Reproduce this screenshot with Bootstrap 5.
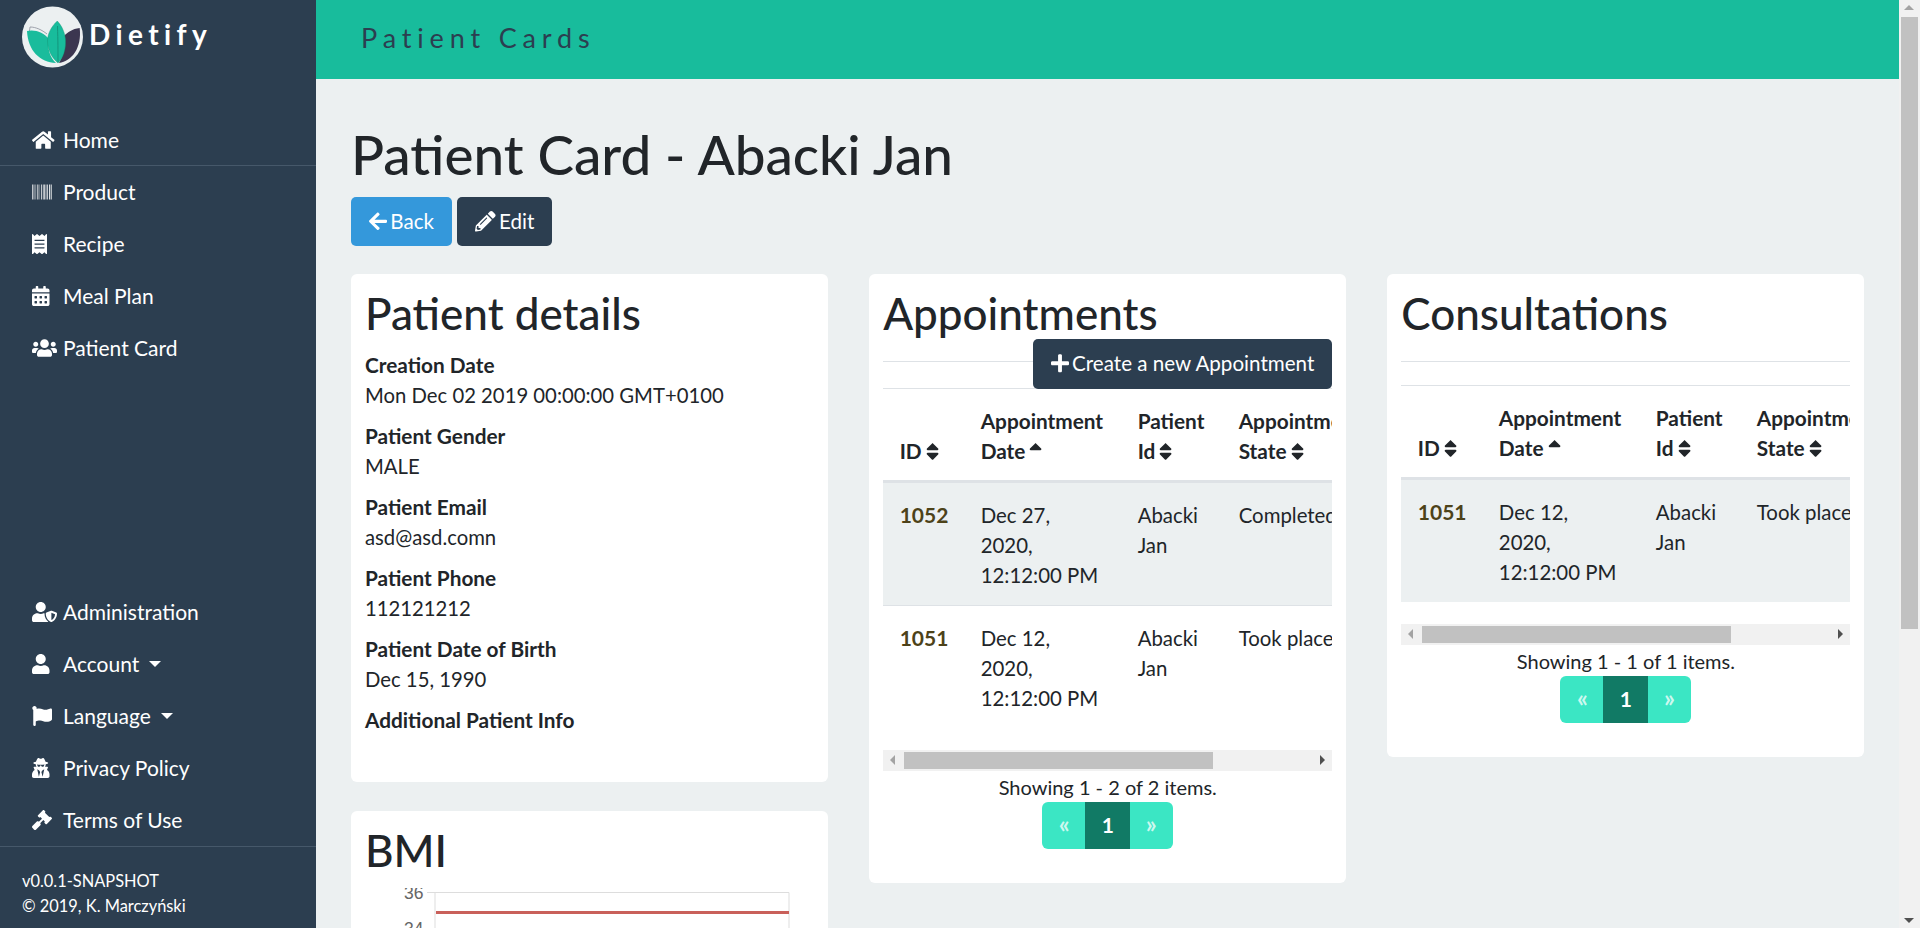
<!DOCTYPE html>
<html lang="en">
<head>
    <meta charset="UTF-8">
    <meta name="viewport" content="width=device-width, initial-scale=1.0">
    <title>Patient Card - Dietify</title>
    <link href="https://cdn.jsdelivr.net/npm/bootstrap@5.3.3/dist/css/bootstrap.min.css" rel="stylesheet">
    <style>
        html { font-size: 20px; }
        body { font-family: Lato, "Liberation Sans", sans-serif; color: #212529; background: #ecf0f1; height: 100vh; overflow: hidden; }
        .ico { height: 1em; width: auto; fill: currentColor; vertical-align: -0.125em; }

        /* sidebar */
        .side-bar { width: 316px; background: #2c3e50; color: #fff; }
        .side-brand { height: 114px; padding: 6px 0 0 22px; }
        .brand-text { font-size: 28px; font-weight: 700; letter-spacing: 5.4px; margin: 8px 0 0 5px; line-height: 40px; }
        .side-link { color: #fff; height: 52px; padding: 0 0 0 32px; display: flex; align-items: center; font-size: 21px; }
        .side-link:hover, .side-link:focus { color: #fff; }
        .side-link.first-link { height: 52px; border-bottom: 1px solid #46586a; }
        .side-link.dropdown-toggle::after { margin-left: 10px; }
        .side-foot { border-top: 1px solid #46586a; padding: 21px 0 10px 22px; font-size: 16.4px; line-height: 25px; }
        .ico-box { display: block; width: 31px; flex: none; }
        .ico-box .ico { height: 20px; display: block; }

        /* top bar */
        .top-bar { height: 79px; background: #18bc9c; color: #2c3e50; padding-left: 45px; font-size: 27px; letter-spacing: 5.85px; line-height: 75px; }
        .page-body { padding: 45px 34.5px 0 35px; }
        .page-title { font-size: 54.8px; line-height: 60px; margin: 0 0 13px; }
        .page-btn { height: 49px; padding: 0 18px; line-height: 48px; border: 0; color: #fff; border-radius: 5px; font-size: 20.6px; }
        .page-btn .ico { margin-right: -2px; }
        .btn-back, .btn-back:hover { background: #3498db; color: #fff; }
        .btn-dark-blue, .btn-dark-blue:hover { background: #2c3e50; color: #fff; }
        .btn-row { margin-bottom: 28px; }

        /* cards */
        .cols-row { --bs-gutter-x: 41px; }
        .panel { background: #fff; border: 0; border-radius: 6px; padding: 15px 14px 34px; margin-bottom: 29px; }
        .panel-title { font-size: 44px; line-height: 48px; margin: 0 0 12px; }
        .panel dt, .panel dd { line-height: 30px; }
        .panel dt { font-weight: 700; font-size: 20.8px; }
        .panel dd { margin-bottom: 11px; font-size: 20.3px; }
        .detail-list { margin: 0; padding: 1px 0 2px; }
        .panel-rule { margin: 24px 0 0; border: 0; border-top: 1px solid #dee2e6; opacity: 1; }
        .tool-row { height: 24px; border-bottom: 1px solid #dee2e6; }
        .tool-row.with-btn { height: 27px; }
        .btn-create { margin-top: -23px; height: 50px; line-height: 49px; }

        /* table */
        .table-clip { overflow: hidden; }
        .appt-table { table-layout: fixed; width: 900px; margin-bottom: 22px; --bs-table-bg: transparent; --bs-table-color: #212529; }
        .appt-table th, .appt-table td { padding: 17px 17px 15px 16.5px; border-bottom: 0; vertical-align: top; line-height: 30px; font-size: 20.4px; }
        .appt-table thead th { padding: 17px 17px 14px 16.5px; vertical-align: bottom; border-bottom: 3px solid #dee2e6; white-space: normal; font-size: 20.8px; }
        .appt-table tbody tr:not(:last-child) td { border-bottom: 1px solid #dee2e6; }
        .appt-table tbody tr.stripe-row td { background: #ecf0f1; }
        .c-id { width: 81px; }
        .c-date { width: 157px; }
        .c-pat { width: 101px; }
        .id-link { color: #4d4219; font-weight: 700; text-decoration: none; font-size: 21px; }
        .sort-ico { height: 21px; vertical-align: -3px; margin-left: -1px; }
        .nowrap-cell { white-space: nowrap; }

        /* fake scrollbars, the browser draws none here */
        .hbar { height: 21px; background: #f1f1f1; }
        .hbar-thumb { width: 309px; height: 17px; background: #c1c1c1; margin: 2px 0 0 21px; }
        .arrow-l, .arrow-r, .arrow-u, .arrow-d { width: 0; height: 0; border-style: solid; position: absolute; }
        .arrow-l { border-width: 5px 5px 5px 0; border-color: transparent #a3a3a3 transparent transparent; left: 7px; top: 5px; }
        .arrow-r { border-width: 5px 0 5px 5px; border-color: transparent transparent transparent #505050; right: 7px; top: 5px; }
        .arrow-u { border-width: 0 5px 5px; border-color: transparent transparent #a3a3a3; left: 5px; top: 5px; }
        .arrow-d { border-width: 5px 5px 0; border-color: #505050 transparent transparent; left: 5px; bottom: 5px; }
        .page-bar { width: 21px; flex: none; background: #f1f1f1; }
        .page-bar-thumb { height: 612px; background: #c1c1c1; margin: 17px 2px 0; }
        .items-note { line-height: 30px; text-align: center; margin-top: 1px; }

        /* pager */
        .pager-row { --bs-pagination-padding-y: 0; --bs-pagination-padding-x: 0; --bs-pagination-border-width: 0; --bs-pagination-border-radius: 6px; margin: 0; }
        .pager-row .page-link { background: #3be6c4; color: #cdf8ef; height: 47px; line-height: 43px; width: 44px; text-align: center; font-weight: 700; font-size: 24px; }
        .pager-row .page-item.active .page-link { background: #117a65; color: #fff; width: 45px; font-size: 21px; line-height: 45px; }

        .chart-box { height: 130px; padding-top: 2px; }
        .bmi-label { font: 17.5px "Liberation Sans", sans-serif; fill: #666; }
    </style>
</head>
<body>
    <svg width="0" height="0" class="d-block">
        <defs>
            <path id="i-home" d="M280.37 148.26L96 300.11V464a16 16 0 0 0 16 16l112.06-.29a16 16 0 0 0 15.92-16V368a16 16 0 0 1 16-16h64a16 16 0 0 1 16 16v95.64a16 16 0 0 0 16 16.05L464 480a16 16 0 0 0 16-16V300L295.67 148.26a12.19 12.19 0 0 0-15.3 0zM571.6 251.47L488 182.56V44.05a12 12 0 0 0-12-12h-56a12 12 0 0 0-12 12v72.61L318.47 43a48 48 0 0 0-61 0L4.34 251.47a12 12 0 0 0-1.6 16.9l25.5 31A12 12 0 0 0 45.15 301l235.22-193.74a12.19 12.19 0 0 1 15.3 0L530.9 301a12 12 0 0 0 16.9-1.6l25.5-31a12 12 0 0 0-1.7-16.93z"/>
            <path id="i-barcode" d="M0 448V64h18v384H0zm26.857 0V64H36v384h-9.143zm27.143 0V64h8.857v384H54zm35.857 0V64h8.857v384h-8.857zM125.714 448V64h17.714v384h-17.714zm44.857 0V64h8.857v384h-8.857zm26.857 0V64h8.857v384h-8.857zm35.715 0V64h18v384h-18zm44.857 0V64h18v384h-18zm35.999 0V64h18.001v384h-18.001zm36.001 0V64h18.001v384h-18.001zm36 0V64h18v384h-18zm53.429 0V64h26.857v384h-26.857zm44.857 0V64h9v384h-9zm18 0V64H512v384h-17.857z"/>
            <path id="i-receipt" d="M358.4 3.2L320 48 265.6 3.2a15.9 15.9 0 0 0-19.2 0L192 48 137.6 3.2a15.9 15.9 0 0 0-19.2 0L64 48 25.6 3.2C15-4.7 0 2.8 0 16v480c0 13.2 15 20.7 25.6 12.8L64 464l54.4 44.8a15.9 15.9 0 0 0 19.2 0L192 464l54.4 44.8a15.9 15.9 0 0 0 19.2 0L320 464l38.4 44.8c10.5 7.9 25.6.4 25.6-12.8V16c0-13.2-15-20.7-25.6-12.8zM320 360c0 4.4-3.6 8-8 8H72c-4.4 0-8-3.6-8-8v-16c0-4.4 3.6-8 8-8h240c4.4 0 8 3.6 8 8v16zm0-96c0 4.4-3.6 8-8 8H72c-4.4 0-8-3.6-8-8v-16c0-4.4 3.6-8 8-8h240c4.4 0 8 3.6 8 8v16zm0-96c0 4.4-3.6 8-8 8H72c-4.4 0-8-3.6-8-8v-16c0-4.4 3.6-8 8-8h240c4.4 0 8 3.6 8 8v16z"/>
            <path id="i-calendar" d="M0 464c0 26.5 21.5 48 48 48h352c26.5 0 48-21.5 48-48V192H0v272zm320-196c0-6.6 5.4-12 12-12h40c6.6 0 12 5.4 12 12v40c0 6.6-5.4 12-12 12h-40c-6.6 0-12-5.4-12-12v-40zm0 128c0-6.6 5.4-12 12-12h40c6.6 0 12 5.4 12 12v40c0 6.6-5.4 12-12 12h-40c-6.6 0-12-5.4-12-12v-40zM192 268c0-6.6 5.4-12 12-12h40c6.6 0 12 5.4 12 12v40c0 6.6-5.4 12-12 12h-40c-6.6 0-12-5.4-12-12v-40zm0 128c0-6.6 5.4-12 12-12h40c6.6 0 12 5.4 12 12v40c0 6.6-5.4 12-12 12h-40c-6.6 0-12-5.4-12-12v-40zM64 268c0-6.6 5.4-12 12-12h40c6.6 0 12 5.4 12 12v40c0 6.6-5.4 12-12 12H76c-6.6 0-12-5.4-12-12v-40zm0 128c0-6.6 5.4-12 12-12h40c6.6 0 12 5.4 12 12v40c0 6.6-5.4 12-12 12H76c-6.6 0-12-5.4-12-12v-40zM400 64h-48V16c0-8.8-7.2-16-16-16h-32c-8.8 0-16 7.2-16 16v48H160V16c0-8.8-7.2-16-16-16h-32c-8.8 0-16 7.2-16 16v48H48C21.5 64 0 85.5 0 112v48h448v-48c0-26.5-21.5-48-48-48z"/>
            <path id="i-users" d="M96 224c35.3 0 64-28.7 64-64s-28.7-64-64-64-64 28.7-64 64 28.7 64 64 64zm448 0c35.3 0 64-28.7 64-64s-28.7-64-64-64-64 28.7-64 64 28.7 64 64 64zm32 32h-64c-17.6 0-33.5 7.1-45.1 18.6 40.3 22.1 68.9 62 75.1 109.4h66c17.7 0 32-14.3 32-32v-32c0-35.3-28.7-64-64-64zm-256 0c61.9 0 112-50.1 112-112S381.9 32 320 32 208 82.1 208 144s50.1 112 112 112zm76.8 32h-8.3c-20.8 10-43.9 16-68.5 16s-47.6-6-68.5-16h-8.3C179.6 288 128 339.6 128 403.2V432c0 26.5 21.5 48 48 48h288c26.5 0 48-21.5 48-48v-28.8c0-63.6-51.6-115.2-115.2-115.2zm-223.7-13.4C161.5 263.1 145.6 256 128 256H64c-35.3 0-64 28.7-64 64v32c0 17.7 14.3 32 32 32h65.9c6.3-47.4 34.9-87.3 75.2-109.4z"/>
            <path id="i-shield" d="M622.3 271.1l-115.2-45c-4.1-1.6-12.6-3.7-22.2 0l-115.2 45c-10.7 4.2-17.7 14-17.7 24.9 0 111.6 68.7 188.8 132.9 213.9 9.6 3.7 18 1.6 22.2 0C558.4 489.9 640 420.5 640 296c0-10.9-7-20.7-17.7-24.9zM496 462.4V273.3l95.5 37.3c-5.6 87.1-60.9 135.4-95.5 151.8zM224 256c70.7 0 128-57.3 128-128S294.7 0 224 0 96 57.3 96 128s57.3 128 128 128zm96 40c0-2.5.8-4.8 1.1-7.2-2.5-.1-4.9-.8-7.5-.8h-16.7c-22.2 10.2-46.9 16-72.9 16s-50.6-5.8-72.9-16h-16.7C60.2 288 0 348.2 0 422.4V464c0 26.5 21.5 48 48 48h352c6.8 0 13.3-1.5 19.2-4-54-42.9-99.2-116.7-99.2-212z"/>
            <path id="i-user" d="M224 256c70.7 0 128-57.3 128-128S294.7 0 224 0 96 57.3 96 128s57.3 128 128 128zm89.6 32h-16.7c-22.2 10.2-46.9 16-72.9 16s-50.6-5.8-72.9-16h-16.7C60.2 288 0 348.2 0 422.4V464c0 26.5 21.5 48 48 48h352c26.5 0 48-21.5 48-48v-41.6c0-74.2-60.2-134.4-134.4-134.4z"/>
            <path id="i-flag" d="M349.565 98.783C295.978 98.783 251.721 64 184.348 64c-24.955 0-47.309 4.384-68.045 12.013a55.947 55.947 0 0 0 3.586-23.562C118.117 24.015 94.806 1.206 66.338.048 34.345-1.254 8 24.296 8 56c0 19.026 9.497 35.825 24 45.945V488c0 13.255 10.745 24 24 24h16c13.255 0 24-10.745 24-24v-94.4c28.311-12.064 63.582-22.122 114.435-22.122 53.588 0 97.844 34.783 165.217 34.783 48.169 0 86.667-16.294 122.505-40.858C506.84 359.452 512 349.571 512 339.045v-243.1c0-23.393-24.269-38.87-45.485-29.016-34.338 15.948-76.454 31.854-116.95 31.854z"/>
            <path id="i-secret" d="M383.9 308.3l23.9-62.6c4-10.5-3.7-21.7-15-21.7h-58.5c11-18.9 17.8-40.6 17.8-64v-.3c39.2-7.8 64-19.1 64-31.7 0-13.3-27.3-25.1-70.1-33-9.2-32.8-27-65.8-40.6-82.8-9.5-11.9-25.9-15.6-39.5-8.8l-27.6 13.8c-9 4.5-19.6 4.5-28.6 0L182.1 3.4c-13.6-6.8-30-3.1-39.5 8.8-13.5 17-31.4 50-40.6 82.8-42.7 7.9-70 19.7-70 33 0 12.6 24.8 23.9 64 31.7v.3c0 23.4 6.8 45.1 17.8 64H56.3c-11.5 0-19.2 11.7-14.7 22.3l25.8 60.2C27.3 329.8 0 372.7 0 422.4v44.8C0 491.9 20.1 512 44.8 512h358.4c24.7 0 44.8-20.1 44.8-44.8v-44.8c0-48.4-25.8-90.4-64.1-114.1zM176 480l-41.6-192 49.6 32 24 40-32 120zm96 0l-32-120 24-40 49.6-32L272 480zm41.7-298.5c-3.9 11.9-7 24.6-16.5 33.4-10.1 9.3-48 22.4-64-25-2.8-8.4-15.4-8.4-18.3 0-17 50.2-56 32.4-64 25-9.5-8.8-12.7-21.5-16.5-33.4-.8-2.5-6.3-5.7-6.3-5.8v-10.8c28.3 3.6 61 5.8 96 5.8s67.7-2.1 96-5.8v10.8c-.1.1-5.6 3.2-6.4 5.8z"/>
            <path id="i-gavel" d="M504.971 199.362l-22.627-22.627c-9.373-9.373-24.569-9.373-33.941 0l-5.657 5.657L329.608 69.255l5.657-5.657c9.373-9.373 9.373-24.569 0-33.941L312.638 7.029c-9.373-9.373-24.569-9.373-33.941 0L154.246 131.48c-9.373 9.373-9.373 24.569 0 33.941l22.627 22.627c9.373 9.373 24.569 9.373 33.941 0l5.657-5.657 39.598 39.598-81.04 81.04-5.657-5.657c-12.497-12.497-32.758-12.497-45.255 0L9.373 412.118c-12.497 12.497-12.497 32.758 0 45.255l45.255 45.255c12.497 12.497 32.758 12.497 45.255 0l114.745-114.745c12.497-12.497 12.497-32.758 0-45.255l-5.657-5.657 81.04-81.04 39.598 39.598-5.657 5.657c-9.373 9.373-9.373 24.569 0 33.941l22.627 22.627c9.373 9.373 24.569 9.373 33.941 0l124.451-124.451c9.372-9.372 9.372-24.568 0-33.941z"/>
            <path id="i-back" d="M257.5 445.1l-22.2 22.2c-9.4 9.4-24.6 9.4-33.9 0L7 273c-9.4-9.4-9.4-24.6 0-33.9L201.4 44.7c9.4-9.4 24.6-9.4 33.9 0l22.2 22.2c9.5 9.5 9.3 25-.4 34.3L136.6 216H424c13.3 0 24 10.7 24 24v32c0 13.3-10.7 24-24 24H136.6l120.5 114.8c9.8 9.3 10 24.8.4 34.3z"/>
            <path id="i-pencil" d="M497.9 142.1l-46.1 46.1c-4.7 4.7-12.3 4.7-17 0l-111-111c-4.7-4.7-4.7-12.3 0-17l46.1-46.1c18.7-18.7 49.1-18.7 67.9 0l60.1 60.1c18.8 18.7 18.8 49.1 0 67.9zM284.2 99.8L21.6 362.4.4 483.9c-2.9 16.4 11.4 30.6 27.8 27.8l121.5-21.3 262.6-262.6c4.7-4.7 4.7-12.3 0-17l-111-111c-4.8-4.7-12.4-4.7-17.1 0zM124.1 339.9c-5.5-5.5-5.5-14.3 0-19.8l154-154c5.5-5.5 14.3-5.5 19.8 0s5.5 14.3 0 19.8l-154 154c-5.5 5.5-14.3 5.5-19.8 0zM88 424h48v36.3l-64.5 11.3-31.1-31.1L51.7 376H88v48z"/>
            <path id="i-plus" d="M416 208H272V64c0-17.67-14.33-32-32-32h-32c-17.67 0-32 14.33-32 32v144H32c-17.67 0-32 14.33-32 32v32c0 17.67 14.33 32 32 32h144v144c0 17.67 14.33 32 32 32h32c17.67 0 32-14.33 32-32V304h144c17.67 0 32-14.33 32-32v-32c0-17.67-14.33-32-32-32z"/>
            <path id="i-sort" d="M41 288h238c21.4 0 32.1 25.9 17 41L177 448c-9.4 9.4-24.6 9.4-33.9 0L24 329c-15.1-15.1-4.4-41 17-41zm255-105L177 64c-9.4-9.4-24.6-9.4-33.9 0L24 183c-15.1 15.1-4.4 41 17 41h238c21.4 0 32.1-25.9 17-41z"/>
            <path id="i-sort-up" d="M279 224H41c-21.4 0-32.1-25.9-17-41L143 64c9.4-9.4 24.6-9.4 33.9 0l119 119c15.2 15.1 4.5 41-16.9 41z"/>
        </defs>
    </svg>

    <div class="d-flex vh-100">
        <nav class="side-bar d-flex flex-column flex-shrink-0">
            <div class="side-brand d-flex align-items-start">
                <svg width="62" height="62" viewBox="0 0 62 62">
                    <circle cx="30.500" cy="31" r="30.500" fill="#ecf0f1"/>
                    <path d="M57.700 22C50 23 46 26 42 30C44 42 41 50 37 57C50 55 60 42 57.700 22z" fill="#3c3650"/>
                    <path d="M7.500 25L8 21C14 21 20 24 25 28" fill="none" stroke="#8c8f9a" stroke-width=".8"/>
                    <path d="M5 25C12 23 22 26 27 33C25 43 28 51 34 57C18 56 6 45 5 25z" fill="#1abc9c"/>
                    <path d="M35.300 15C29 21 25.500 28 25.500 35C25.500 45 31 53 36 57C41 52 44 44 43.500 34C43 27 40 20 35.300 15z" fill="#18bc9c" stroke="#12906f" stroke-width=".4"/>
                    <path d="M35.500 20C36 35 36 45 36 56" fill="none" stroke="#118a72" stroke-width=".8"/>
                </svg>
                <div class="brand-text">Dietify</div>
            </div>
            <a class="nav-link side-link first-link" href="#"><span class="ico-box"><svg class="ico" viewBox="0 0 576 512"><use href="#i-home"/></svg></span>Home</a>
            <a class="nav-link side-link" href="#"><span class="ico-box"><svg class="ico" viewBox="0 0 512 512"><use href="#i-barcode"/></svg></span>Product</a>
            <a class="nav-link side-link" href="#"><span class="ico-box"><svg class="ico" viewBox="0 0 384 512"><use href="#i-receipt"/></svg></span>Recipe</a>
            <a class="nav-link side-link" href="#"><span class="ico-box"><svg class="ico" viewBox="0 0 448 512"><use href="#i-calendar"/></svg></span>Meal Plan</a>
            <a class="nav-link side-link" href="#"><span class="ico-box"><svg class="ico" viewBox="0 0 640 512"><use href="#i-users"/></svg></span>Patient Card</a>
            <div class="mt-auto">
                <a class="nav-link side-link" href="#"><span class="ico-box"><svg class="ico" viewBox="0 0 640 512"><use href="#i-shield"/></svg></span>Administration</a>
                <a class="nav-link side-link dropdown-toggle" href="#"><span class="ico-box"><svg class="ico" viewBox="0 0 448 512"><use href="#i-user"/></svg></span>Account</a>
                <a class="nav-link side-link dropdown-toggle" href="#"><span class="ico-box"><svg class="ico" viewBox="0 0 512 512"><use href="#i-flag"/></svg></span>Language</a>
                <a class="nav-link side-link" href="#"><span class="ico-box"><svg class="ico" viewBox="0 0 448 512"><use href="#i-secret"/></svg></span>Privacy Policy</a>
                <a class="nav-link side-link" href="#"><span class="ico-box"><svg class="ico" viewBox="0 0 512 512"><use href="#i-gavel"/></svg></span>Terms of Use</a>
            </div>
            <div class="side-foot">v0.0.1-SNAPSHOT<br>© 2019, K. Marczyński</div>
        </nav>

        <div class="flex-grow-1 overflow-hidden">
            <div class="top-bar">Patient Cards</div>
            <main class="page-body">
                <h1 class="page-title">Patient Card - Abacki Jan</h1>
                <div class="btn-row">
                    <a href="#" class="btn page-btn btn-back"><svg class="ico" viewBox="0 0 448 512"><use href="#i-back"/></svg> Back</a>
                    <a href="#" class="btn page-btn btn-dark-blue"><svg class="ico" viewBox="0 0 512 512"><use href="#i-pencil"/></svg> Edit</a>
                </div>
                <div class="row cols-row">
                    <div class="col-4">
                        <div class="panel">
                            <h2 class="panel-title">Patient details</h2>
                            <dl class="detail-list">
                                <dt>Creation Date</dt>
                                <dd>Mon Dec 02 2019 00:00:00 GMT+0100</dd>
                                <dt>Patient Gender</dt>
                                <dd>MALE</dd>
                                <dt>Patient Email</dt>
                                <dd>asd@asd.comn</dd>
                                <dt>Patient Phone</dt>
                                <dd>112121212</dd>
                                <dt>Patient Date of Birth</dt>
                                <dd>Dec 15, 1990</dd>
                                <dt>Additional Patient Info</dt>
                                <dd></dd>
                            </dl>
                        </div>
                        <div class="panel">
                            <h2 class="panel-title">BMI</h2>
                            <div class="chart-box">
                                <svg width="449" height="130" viewBox="0 0 449 130">
                                    <text class="bmi-label" x="39" y="11">36</text>
                                    <path d="M62 4.500H70M70 4.500H424V130M70 4V130" fill="none" stroke="#ddd"/>
                                    <path d="M71 24.500H424" stroke="#c9605a" stroke-width="3"/>
                                    <text class="bmi-label" x="39" y="47">34</text>
                                    <path d="M62 43.500H424" stroke="#ddd"/>
                                </svg>
                            </div>
                        </div>
                    </div>

                    <div class="col-4">
                        <div class="panel">
                            <h2 class="panel-title">Appointments</h2>
                            <hr class="panel-rule">
                            <div class="tool-row with-btn d-flex justify-content-end">
                                <a href="#" class="btn page-btn btn-dark-blue btn-create"><svg class="ico" viewBox="0 0 448 512"><use href="#i-plus"/></svg> Create a new Appointment</a>
                            </div>
                            <div class="table-clip">
                                <table class="table appt-table">
                                    <thead>
                                        <tr>
                                            <th class="c-id">ID <svg class="ico sort-ico" viewBox="0 0 320 512"><use href="#i-sort"/></svg></th>
                                            <th class="c-date">Appointment Date <svg class="ico sort-ico" viewBox="0 0 320 512"><use href="#i-sort-up"/></svg></th>
                                            <th class="c-pat">Patient Id <svg class="ico sort-ico" viewBox="0 0 320 512"><use href="#i-sort"/></svg></th>
                                            <th>Appointment<br>State <svg class="ico sort-ico" viewBox="0 0 320 512"><use href="#i-sort"/></svg></th>
                                        </tr>
                                    </thead>
                                    <tbody>
                                        <tr class="stripe-row">
                                            <td><a href="#" class="id-link">1052</a></td>
                                            <td>Dec 27,<br>2020,<br>12:12:00 PM</td>
                                            <td>Abacki Jan</td>
                                            <td class="nowrap-cell">Completed</td>
                                        </tr>
                                        <tr>
                                            <td><a href="#" class="id-link">1051</a></td>
                                            <td>Dec 12,<br>2020,<br>12:12:00 PM</td>
                                            <td>Abacki Jan</td>
                                            <td class="nowrap-cell">Took place</td>
                                        </tr>
                                    </tbody>
                                </table>
                            </div>
                            <div class="hbar position-relative d-flex"><span class="arrow-l"></span><div class="hbar-thumb"></div><span class="arrow-r"></span></div>
                            <div class="items-note">Showing 1 - 2 of 2 items.</div>
                            <ul class="pagination pager-row justify-content-center">
                                <li class="page-item"><a class="page-link" href="#">«</a></li>
                                <li class="page-item active"><a class="page-link" href="#">1</a></li>
                                <li class="page-item"><a class="page-link" href="#">»</a></li>
                            </ul>
                        </div>
                    </div>

                    <div class="col-4">
                        <div class="panel">
                            <h2 class="panel-title">Consultations</h2>
                            <hr class="panel-rule">
                            <div class="tool-row"></div>
                            <div class="table-clip">
                                <table class="table appt-table">
                                    <thead>
                                        <tr>
                                            <th class="c-id">ID <svg class="ico sort-ico" viewBox="0 0 320 512"><use href="#i-sort"/></svg></th>
                                            <th class="c-date">Appointment Date <svg class="ico sort-ico" viewBox="0 0 320 512"><use href="#i-sort-up"/></svg></th>
                                            <th class="c-pat">Patient Id <svg class="ico sort-ico" viewBox="0 0 320 512"><use href="#i-sort"/></svg></th>
                                            <th>Appointment<br>State <svg class="ico sort-ico" viewBox="0 0 320 512"><use href="#i-sort"/></svg></th>
                                        </tr>
                                    </thead>
                                    <tbody>
                                        <tr class="stripe-row">
                                            <td><a href="#" class="id-link">1051</a></td>
                                            <td>Dec 12,<br>2020,<br>12:12:00 PM</td>
                                            <td>Abacki Jan</td>
                                            <td class="nowrap-cell">Took place</td>
                                        </tr>
                                    </tbody>
                                </table>
                            </div>
                            <div class="hbar position-relative d-flex"><span class="arrow-l"></span><div class="hbar-thumb"></div><span class="arrow-r"></span></div>
                            <div class="items-note">Showing 1 - 1 of 1 items.</div>
                            <ul class="pagination pager-row justify-content-center">
                                <li class="page-item"><a class="page-link" href="#">«</a></li>
                                <li class="page-item active"><a class="page-link" href="#">1</a></li>
                                <li class="page-item"><a class="page-link" href="#">»</a></li>
                            </ul>
                        </div>
                    </div>
                </div>
            </main>
        </div>
        <div class="page-bar position-relative"><span class="arrow-u"></span><div class="page-bar-thumb"></div><span class="arrow-d"></span></div>
    </div>

    <script src="https://cdn.jsdelivr.net/npm/bootstrap@5.3.3/dist/js/bootstrap.bundle.min.js"></script>
</body>
</html>
